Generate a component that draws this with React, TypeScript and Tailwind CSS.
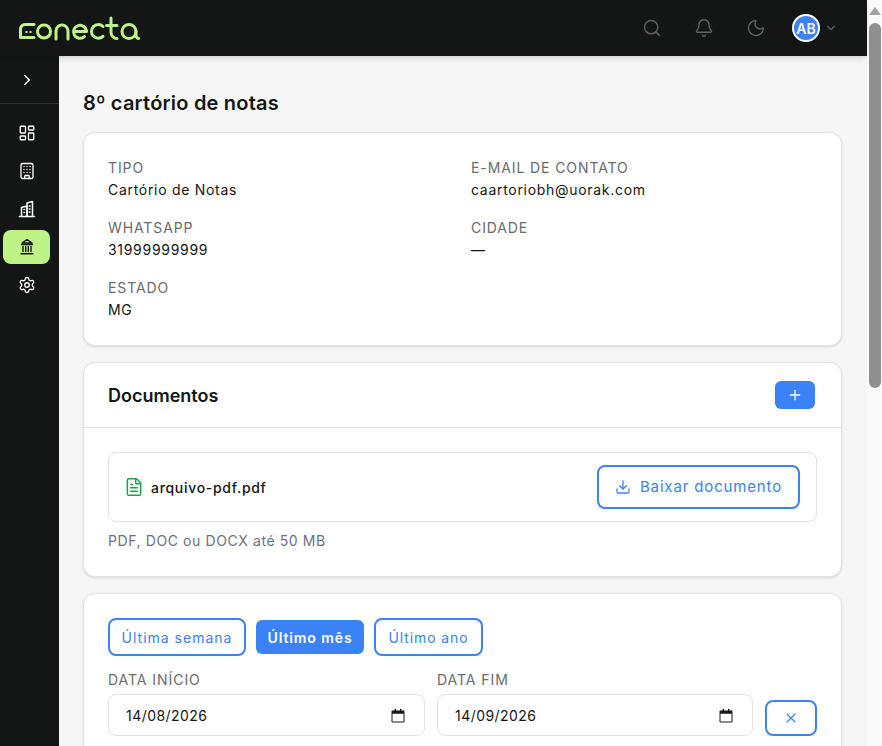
import { Search, Bell, Moon, ChevronDown, ChevronRight, LayoutDashboard, Building, Settings, Plus, Download, FileText, X } from "lucide-react";

function Logo() {
  return (
    <svg width="121" height="25" viewBox="0 0 121 25" fill="none" stroke="#bef386" strokeWidth="3" strokeLinecap="round" strokeLinejoin="round">
      <path d="M15 8.500H6a4.500 4.500 0 0 0-4.500 4.500v8.500H15" />
      <path d="M6.500 16h2M10.500 16h2" strokeWidth="2" strokeLinecap="butt" />
      <circle cx="25" cy="15.500" r="6.500" />
      <path d="M37 23v-8a6 6 0 0 1 12 0V23" />
      <path d="M55 15.500h12.500a6.500 6.500 0 1 0-2 5" />
      <path d="M84 10.500a6.800 6.800 0 1 0 0 9.800" />
      <path d="M92 2v14.500a6 6 0 0 0 6 6M87.500 9.500H98" />
      <circle cx="110" cy="15.500" r="7" />
      <path d="M117 15v4a3.500 3.500 0 0 0 2.500 3.500" />
    </svg>
  );
}

function TowersIcon() {
  return (
    <svg width="18" height="18" viewBox="0 0 18 18" fill="none" stroke="currentColor" strokeWidth="1.5" strokeLinecap="round" strokeLinejoin="round">
      <path d="M1.500 16.500h15" />
      <path d="M3.500 16.500V7.500L9 6v10.500" />
      <path d="M9 16.500V3L14.500 1.500v15" />
      <path d="M6 9.500h.5M6 12.500h.5M11.250 6h.75M11.250 9h.75M11.250 12h.75" />
    </svg>
  );
}

function BankIcon() {
  return (
    <svg width="18" height="18" viewBox="0 0 18 18" fill="none" stroke="currentColor" strokeWidth="1.4" strokeLinecap="round" strokeLinejoin="round">
      <path d="M4 5 9 1.700 14 5Z" />
      <path d="M3.500 6.500h11" />
      <path d="M5 8.500v5M7.700 8.500v5M10.300 8.500v5M13 8.500v5" />
      <path d="M3 15.700h12" />
    </svg>
  );
}

function Field({ label, value }: { label: string; value: string }) {
  return (
    <div className="h-[48px]">
      <div className="text-[14px] leading-[20px] tracking-[0.9px] text-[#6b6b6b] uppercase">{label}</div>
      <div className="text-[14px] leading-[20px] tracking-[0.7px] text-[#141615] mt-[2px]">{value}</div>
    </div>
  );
}

function DateField({ label, value, className }: { label: string; value: string; className: string }) {
  return (
    <div className={className}>
      <div className="text-[14px] leading-[20px] tracking-[0.95px] text-[#6b6b6b] uppercase mb-[4px]">{label}</div>
      <div className="h-[42px] rounded-[8px] border border-[#e2e2e2] bg-white flex items-center justify-between pl-[17px] pr-[19px]">
        <span className="text-[14px] tracking-[0.45px] text-[#141615]">{value}</span>
        <svg width="14" height="15" viewBox="0 0 14 15" fill="#1a1a1a">
          <path d="M1.500 2.500h2V1h1.500v1.500h4V1h1.500v1.500h2a1 1 0 0 1 1 1v10a1 1 0 0 1-1 1h-11a1 1 0 0 1-1-1v-10a1 1 0 0 1 1-1Zm0 3.200v7.800h11V5.700Z" />
        </svg>
      </div>
    </div>
  );
}

export default function App() {
  const nav = [
    { I: <LayoutDashboard size={18} strokeWidth={1.75} />, active: false },
    { I: <Building size={18} strokeWidth={1.75} />, active: false },
    { I: <TowersIcon />, active: false },
    { I: <BankIcon />, active: true },
    { I: <Settings size={18} strokeWidth={1.75} />, active: false },
  ];
  return (
    <div className="h-[746px] flex bg-[#f6f6f6] overflow-hidden" style={{ fontFamily: "Inter, 'Noto Sans', sans-serif" }}>
      <div className="w-[867px] flex flex-col shrink-0">
        <header className="h-[56px] shrink-0 bg-[#141615] flex items-center justify-between pl-[19px] pr-[29px] shadow-md relative z-10">
          <Logo />
          <div className="flex items-center">
            <Search size={20} className="text-[#5f6160]" strokeWidth={1.75} />
            <Bell size={20} className="text-[#5f6160] ml-[32px]" strokeWidth={1.75} />
            <Moon size={20} className="text-[#5f6160] ml-[32px]" strokeWidth={1.75} />
            <div className="ml-[26px] w-[28px] h-[28px] rounded-full bg-[#3b82f6] border-2 border-white flex items-center justify-center text-white text-[14px] font-semibold">AB</div>
            <ChevronDown size={14} className="text-[#5f6160] ml-[4px]" />
          </div>
        </header>
        <div className="flex flex-1 min-h-0">
          <aside className="w-[59px] shrink-0 bg-[#141615] flex flex-col">
            <div className="h-[48px] border-b border-[#2e2f2f] flex items-center justify-center pr-[5px]">
              <ChevronRight size={18} className="text-white" />
            </div>
            <nav className="flex flex-col gap-[4px] pt-[12px] px-[3px]">
              {nav.map(({ I, active }, i) => (
                <div key={i} className={`h-[34px] w-[47px] rounded-[8px] flex items-center justify-center ${active ? "bg-[#bef386] text-[#141615]" : "text-white"}`}>
                  {I}
                </div>
              ))}
            </nav>
          </aside>
          <main className="flex-1 min-w-0 pl-[24px] pr-[25px] pt-[34px]">
            <h1 className="text-[20px] leading-[26px] font-semibold tracking-[0.2px] text-[#141615] mb-[16px]">8º cartório de notas</h1>
            <section className="h-[214px] rounded-[12px] border border-[#e2e2e2] bg-white shadow-sm px-[24px] pt-[25px] mb-[16px]">
              <div className="grid grid-cols-2 gap-x-[17px] gap-y-[12px]">
                <Field label="Tipo" value="Cartório de Notas" />
                <Field label="E-mail de contato" value="caartoriobh@uorak.com" />
                <Field label="WhatsApp" value="31999999999" />
                <Field label="Cidade" value="—" />
                <Field label="Estado" value="MG" />
              </div>
            </section>
            <section className="h-[215px] rounded-[12px] border border-[#e2e2e2] bg-white shadow-sm mb-[16px]">
              <div className="h-[65px] border-b border-[#e2e2e2] flex items-center justify-between pl-[24px] pr-[26px]">
                <h2 className="text-[18px] font-semibold text-[#141615]">Documentos</h2>
                <button className="w-[40px] h-[28px] rounded-[6px] bg-[#3b82f6] flex items-center justify-center text-white"><Plus size={16} /></button>
              </div>
              <div className="px-[24px] pt-[24px]">
                <div className="h-[70px] rounded-[8px] border border-[#e2e2e2] flex items-center justify-between pl-[15px] pr-[16px]">
                  <div className="flex items-center">
                    <FileText size={20} strokeWidth={1.75} className="text-[#16a34a]" />
                    <span className="ml-[7px] text-[14px] font-medium tracking-[0.7px] text-[#141615]">arquivo-pdf.pdf</span>
                  </div>
                  <button className="w-[203px] h-[44px] rounded-[8px] border-2 border-[#3b82f6] flex items-center justify-center text-[#3b82f6] text-[15px] tracking-[0.85px]">
                    <Download size={16} className="mr-[9px]" />Baixar documento
                  </button>
                </div>
                <p className="mt-[9px] text-[14px] leading-[20px] tracking-[0.6px] text-[#6b7280]">PDF, DOC ou DOCX até 50 MB</p>
              </div>
            </section>
            <section className="rounded-[12px] border border-[#e2e2e2] bg-white shadow-sm pl-[24px] pr-[24px] pt-[24px] h-[200px]">
              <div className="flex items-center gap-[10px]">
                <button className="w-[138px] h-[38px] rounded-[8px] border-2 border-[#3b82f6] text-[#3b82f6] text-[14px] tracking-[1px]">Última semana</button>
                <button className="w-[108px] h-[34px] rounded-[6px] bg-[#3b82f6] text-white text-[14px] font-semibold tracking-[0.9px]">Último mês</button>
                <button className="w-[109px] h-[38px] rounded-[8px] border-2 border-[#3b82f6] text-[#3b82f6] text-[14px] tracking-[0.9px]">Último ano</button>
              </div>
              <div className="flex items-start mt-[14px]">
                <DateField label="Data início" value="14/08/2026" className="w-[317px]" />
                <DateField label="Data fim" value="14/09/2026" className="w-[316px] ml-[12px]" />
                <button className="w-[52px] h-[36px] rounded-[8px] border-2 border-[#3b82f6] flex items-center justify-center text-[#3b82f6] ml-[12px] mt-[30px]"><X size={16} strokeWidth={1.75} /></button>
              </div>
            </section>
          </main>
        </div>
      </div>
      <div className="w-[15px] shrink-0 bg-[#fafafa] flex flex-col items-center">
        <div className="mt-[7px] w-0 h-0 border-l-[6px] border-r-[6px] border-b-[8px] border-l-transparent border-r-transparent border-b-[#a3a3a3]" />
        <div className="mt-[8px] w-[12px] h-[365px] rounded-[6px] bg-[#8f8f8f]" />
      </div>
    </div>
  );
}
